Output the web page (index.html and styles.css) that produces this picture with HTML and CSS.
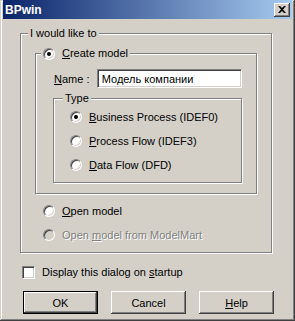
FILE: index.html
```html
<!DOCTYPE html>
<html lang="en">
<head>
    <meta charset="UTF-8">
    <meta name="viewport" content="width=device-width, initial-scale=1.0">
    <title>BPwin</title>
    <link rel="stylesheet" href="styles.css">
</head>
<body>
    <div class="window">
        <div class="titlebar">
            <span class="title">BPwin</span>
            <span class="close">
                <svg width="8" height="7" viewBox="0 0 8 7"><path d="M0 0h2l2 2 2-2h2L5 3.5 8 7H6L4 5 2 7H0l3-3.5z" fill="#000"/></svg>
            </span>
        </div>
        <div class="content">
            <div class="group outer">
                <span class="legend">I would like to</span>
                <div class="group create">
                    <span class="legend option"><span class="radio checked"></span><span><u>C</u>reate model</span></span>
                    <div class="name-row">
                        <span class="name-label"><u>N</u>ame :</span>
                        <span class="field">Модель компании</span>
                    </div>
                    <div class="group type">
                        <span class="legend">Type</span>
                        <div class="option row"><span class="radio checked"></span><span><u>B</u>usiness Process (IDEF0)</span></div>
                        <div class="option row"><span class="radio"></span><span><u>P</u>rocess Flow (IDEF3)</span></div>
                        <div class="option row"><span class="radio"></span><span><u>D</u>ata Flow (DFD)</span></div>
                    </div>
                </div>
                <div class="open-list">
                    <div class="option row"><span class="radio"></span><span><u>O</u>pen model</span></div>
                    <div class="option row disabled"><span class="radio"></span><span>Open <u>m</u>odel from ModelMart</span></div>
                </div>
            </div>
            <div class="option startup"><span class="checkbox"></span><span>Display this dialog on <u>s</u>tartup</span></div>
            <div class="buttons">
                <span class="btn default">OK</span>
                <span class="btn">Cancel</span>
                <span class="btn"><u>H</u>elp</span>
            </div>
        </div>
    </div>
</body>
</html>
```

FILE: styles.css
```css
body {
    margin: 0;
    font-family: "Liberation Sans", Arial, sans-serif;
    font-size: 11px;
    color: #000;
    background: #d4d0c8;
}
.window {
    width: 295px;
    height: 321px;
    box-sizing: border-box;
    padding: 0 3px 3px 3px;
    background: #d4d0c8;
    box-shadow: inset -1px -1px #404040, inset 1px 1px #d4d0c8, inset -2px -2px #808080, inset 2px 2px #fff;
}
.titlebar {
    height: 19px;
    display: flex;
    align-items: center;
    justify-content: space-between;
    padding: 0 2px 0 2px;
    background: linear-gradient(to right, #0a246a, #a6caf0);
}
.title {
    color: #fff;
    font-weight: bold;
    font-size: 12px;
}
.close {
    width: 16px;
    height: 14px;
    box-sizing: border-box;
    display: flex;
    align-items: center;
    justify-content: center;
    background: #d4d0c8;
    box-shadow: inset -1px -1px #404040, inset 1px 1px #fff, inset -2px -2px #808080;
}
.content {
    padding-left: 17px;
}
.group {
    position: relative;
    box-sizing: border-box;
    border: 1px solid #808080;
    box-shadow: inset 1px 1px #fff, 1px 1px #fff;
}
.legend {
    position: absolute;
    top: -7px;
    left: 7px;
    padding: 0 2px;
    line-height: 13px;
    background: #d4d0c8;
}
.outer {
    width: 252px;
    margin-top: 14px;
    padding: 0 14px 5px 14px;
}
.create {
    width: 222px;
    margin-top: 19px;
    padding: 0 14px 10px 17px;
}
.create > .legend {
    left: 5px;
}
.type {
    width: 189px;
    margin-top: 10px;
    padding: 6px 0 5px 16px;
}
.type > .legend {
    left: 9px;
}
.name-row {
    display: flex;
    align-items: center;
    margin: 15px 0 0 1px;
}
.name-label {
    width: 43px;
}
.field {
    width: 146px;
    height: 19px;
    box-sizing: border-box;
    padding: 0 4px;
    display: flex;
    align-items: center;
    background: #fff;
    border: 1px solid;
    border-color: #808080 #fff #fff #808080;
    box-shadow: inset 1px 1px #404040, inset -1px -1px #d4d0c8;
}
.option {
    display: flex;
    align-items: center;
    gap: 7px;
}
.row {
    height: 24px;
}
.open-list {
    margin: 5px 0 0 8px;
}
.radio {
    width: 12px;
    height: 12px;
    box-sizing: border-box;
    border-radius: 50%;
    background: #fff;
    border: 1px solid;
    border-color: #808080 #fff #fff #808080;
    box-shadow: inset 1px 1px #404040, inset -1px -1px #d4d0c8;
    display: flex;
    align-items: center;
    justify-content: center;
}
.radio.checked::after {
    content: "";
    width: 4px;
    height: 4px;
    border-radius: 50%;
    background: #000;
}
.disabled {
    color: #808080;
    text-shadow: 1px 1px #fff;
}
.disabled .radio {
    background: #d4d0c8;
}
.startup {
    height: 16px;
    margin: 11px 0 0 2px;
}
.checkbox {
    width: 13px;
    height: 13px;
    box-sizing: border-box;
    background: #fff;
    border: 1px solid;
    border-color: #808080 #fff #fff #808080;
    box-shadow: inset 1px 1px #404040, inset -1px -1px #d4d0c8;
}
.buttons {
    display: flex;
    gap: 13px;
    margin: 11px 0 0 3px;
}
.btn {
    width: 75px;
    height: 23px;
    box-sizing: border-box;
    display: flex;
    align-items: center;
    justify-content: center;
    background: #d4d0c8;
    box-shadow: inset -1px -1px #404040, inset 1px 1px #fff, inset -2px -2px #808080;
}
.btn.default {
    border: 1px solid #000;
}
```
